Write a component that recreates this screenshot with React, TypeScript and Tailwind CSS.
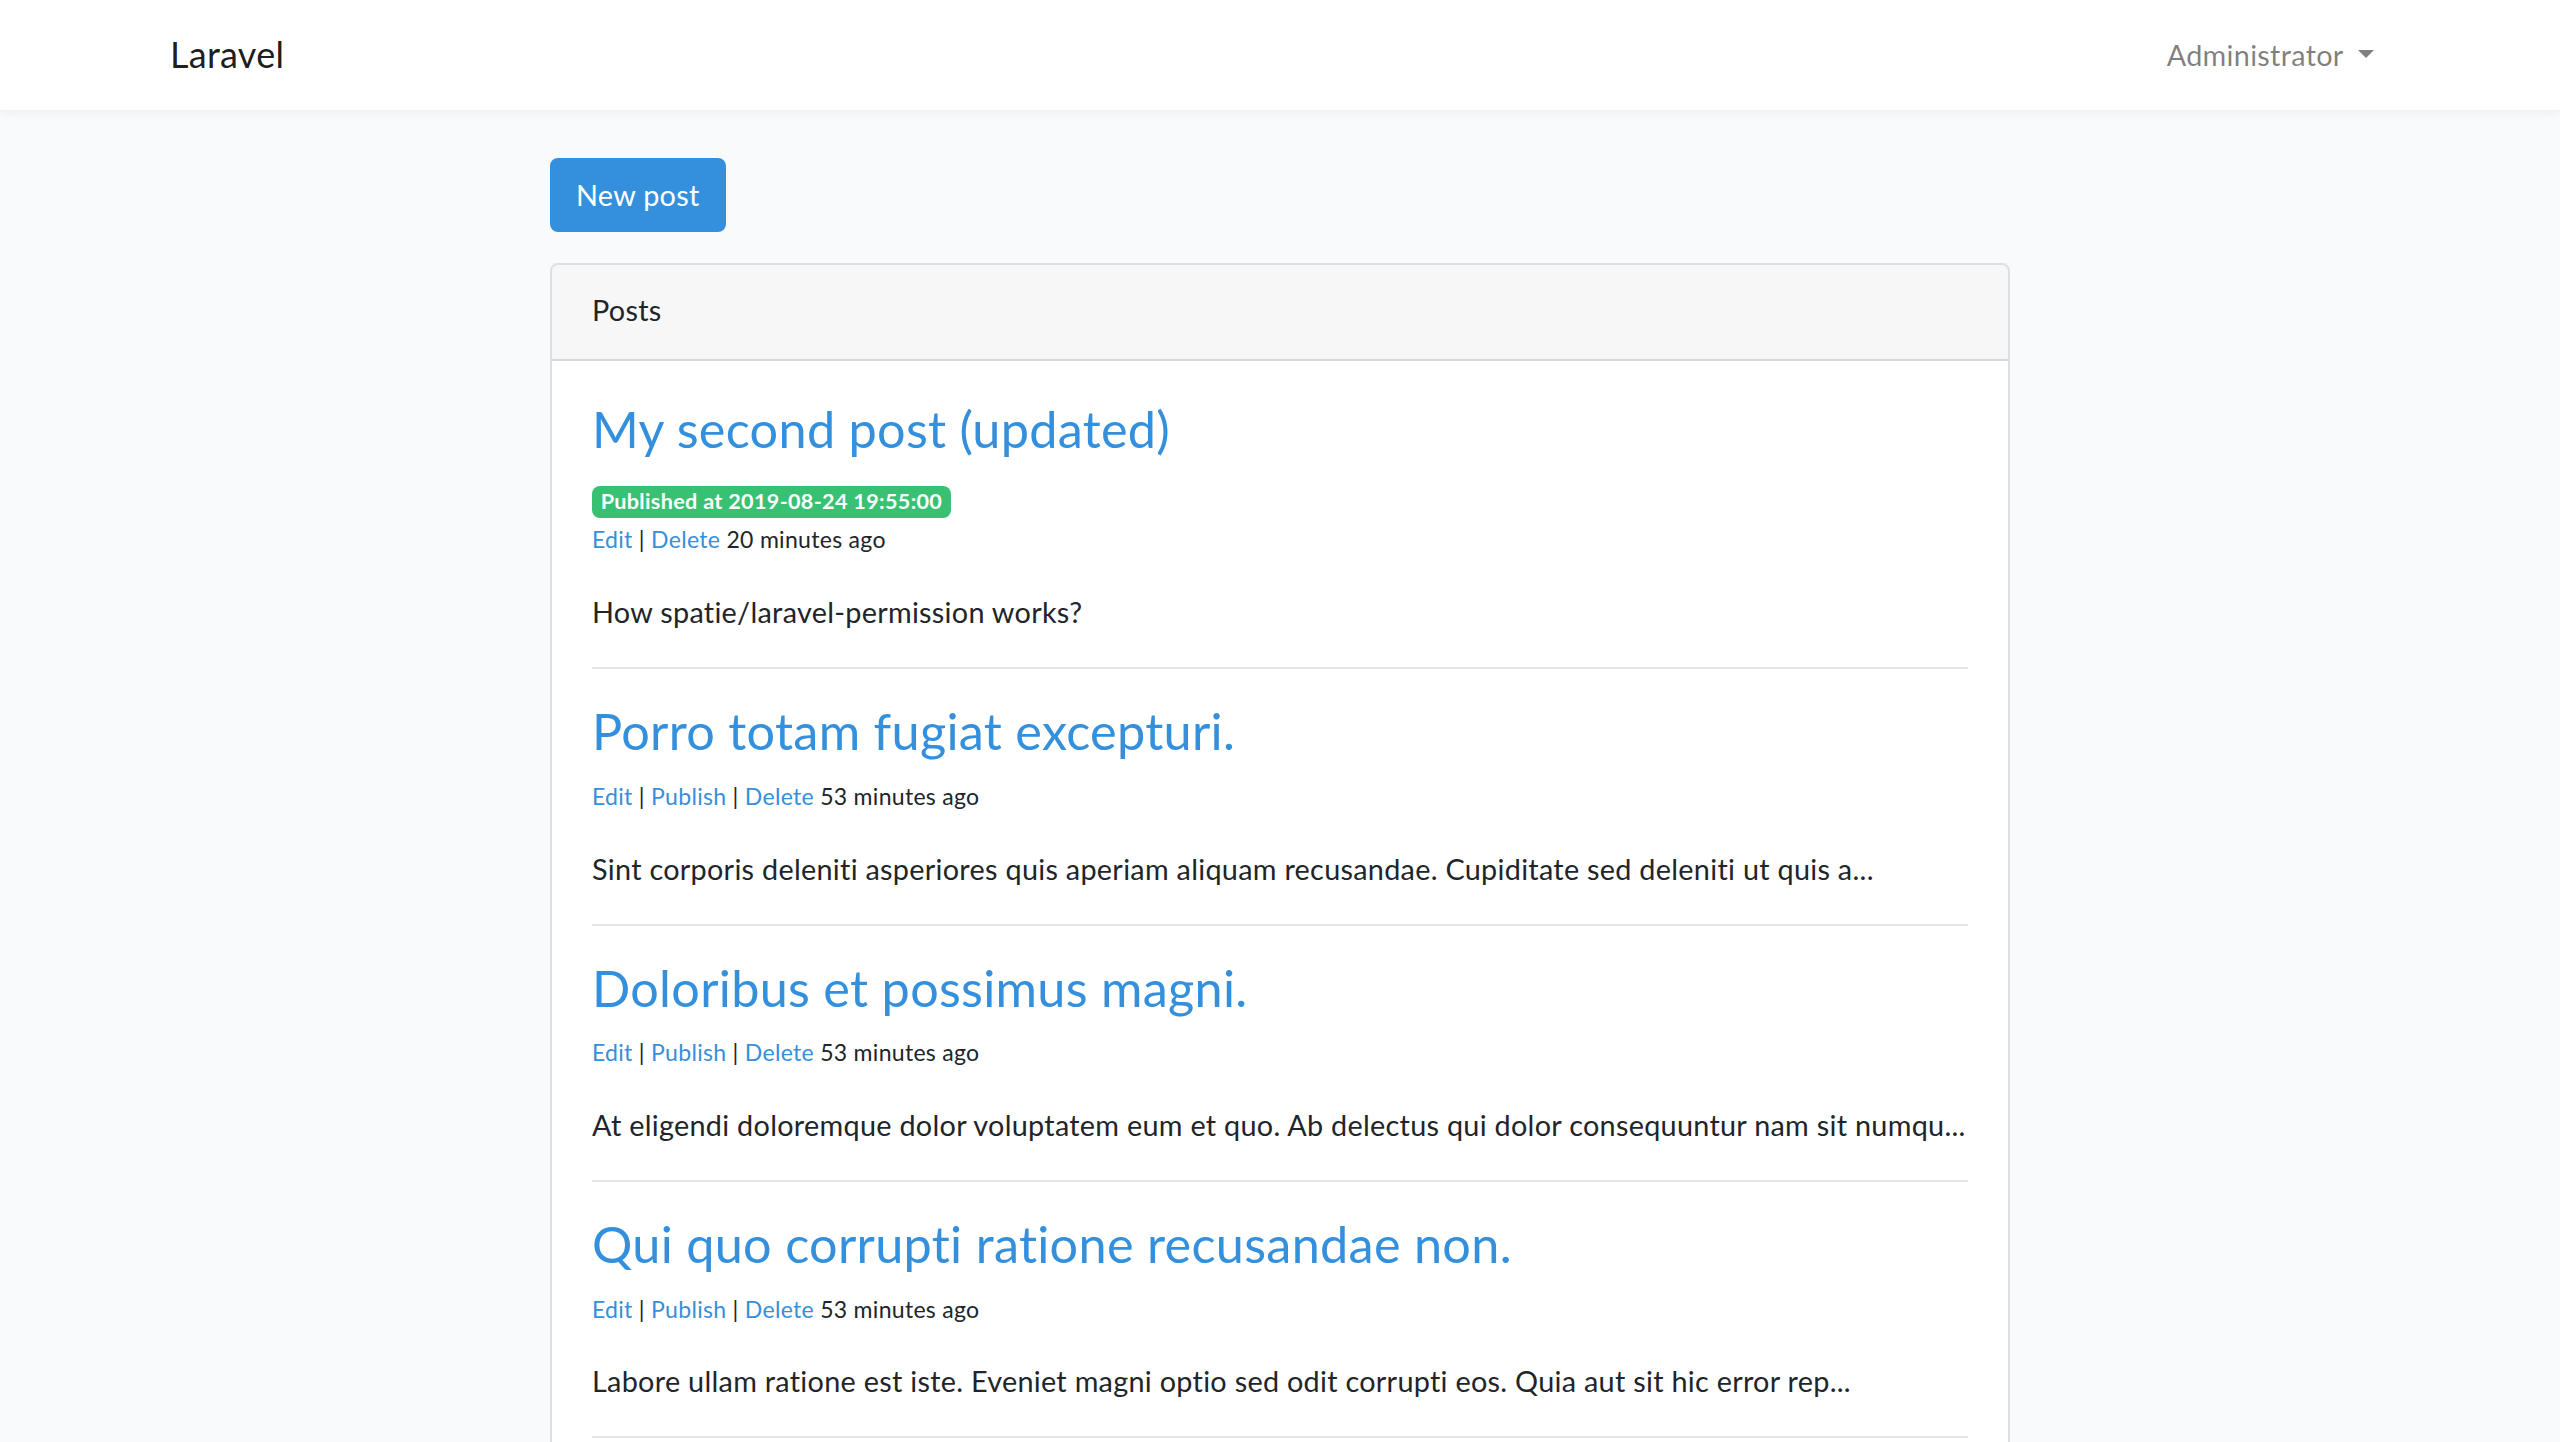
import * as React from "react";

type Post = {
  title: string;
  publishedAt?: string;
  canPublish: boolean;
  ago: string;
  excerpt: string;
};

const posts: Post[] = [
  {
    title: "My second post (updated)",
    publishedAt: "2019-08-24 19:55:00",
    canPublish: false,
    ago: "20 minutes ago",
    excerpt: "How spatie/laravel-permission works?",
  },
  {
    title: "Porro totam fugiat excepturi.",
    canPublish: true,
    ago: "53 minutes ago",
    excerpt:
      "Sint corporis deleniti asperiores quis aperiam aliquam recusandae. Cupiditate sed deleniti ut quis a...",
  },
  {
    title: "Doloribus et possimus magni.",
    canPublish: true,
    ago: "53 minutes ago",
    excerpt:
      "At eligendi doloremque dolor voluptatem eum et quo. Ab delectus qui dolor consequuntur nam sit numqu...",
  },
  {
    title: "Qui quo corrupti ratione recusandae non.",
    canPublish: true,
    ago: "53 minutes ago",
    excerpt:
      "Labore ullam ratione est iste. Eveniet magni optio sed odit corrupti eos. Quia aut sit hic error rep...",
  },
];

const Navbar = () => (
  <nav className="bg-white py-4 shadow-[0_4px_8px_rgba(0,0,0,0.04)]">
    <div className="mx-auto flex w-[2280px] items-center justify-between px-[30px]">
      <a className="py-[10px] text-[36px] leading-[57.6px] text-[rgba(0,0,0,0.9)]">
        Laravel
      </a>
      <a className="inline-block px-4 text-[28.8px] leading-[46.08px] text-[rgba(0,0,0,0.5)]">
        Administrator{" "}
        <span className="ml-[0.255em] inline-block h-0 w-0 border-x-[0.3em] border-t-[0.3em] border-x-transparent border-t-[rgba(0,0,0,0.5)] align-[0.255em]"></span>
      </a>
    </div>
  </nav>
);

const PostItem = ({ post }: { post: Post }) => (
  <div>
    <h3 className="mb-4 text-[50.4px] leading-[1.2] text-[#3490dc]">
      <a>{post.title}</a>
    </h3>
    {post.publishedAt && (
      <div className="leading-[46.08px]">
        <span className="inline-block rounded-[8px] bg-[#38c172] px-[8.64px] py-[5.4px] text-[21.6px] font-bold leading-none tracking-[0.015em] text-white">
          Published at {post.publishedAt}
        </span>
      </div>
    )}
    <div className="text-[23.04px] leading-[36.86px]">
      <a className="text-[#3490dc]">Edit</a> |{" "}
      {post.canPublish && (
        <>
          <a className="text-[#3490dc]">Publish</a> |{" "}
        </>
      )}
      <a className="text-[#3490dc]">Delete</a> {post.ago}
    </div>
    <p className="mt-[31px] whitespace-nowrap">{post.excerpt}</p>
    <hr className="my-8 border-t-2 border-[rgba(0,0,0,0.1)]" />
  </div>
);

export default function App() {
  return (
    <div className="min-h-screen bg-[#f8fafc] font-['Lato',sans-serif] text-[28.8px] leading-[1.6] tracking-[0.01em] text-[#212529]">
      <Navbar />
      <main className="py-12">
        <div className="mx-auto w-[1460px]">
          <button className="mb-[31px] block rounded-[8px] border-2 border-[#3490dc] bg-[#3490dc] px-6 py-3 text-[28.8px] leading-[46.08px] text-white">
            New post
          </button>
          <div className="rounded-[8px] border-2 border-[rgba(0,0,0,0.125)] bg-white">
            <div className="rounded-t-[6px] border-b-2 border-[rgba(0,0,0,0.125)] bg-[rgba(0,0,0,0.03)] px-10 pt-[22px] pb-[26px]">
              Posts
            </div>
            <div className="px-10 pt-[38px] pb-10">
              {posts.map((post, i) => (
                <PostItem key={i} post={post} />
              ))}
            </div>
          </div>
        </div>
      </main>
    </div>
  );
}
